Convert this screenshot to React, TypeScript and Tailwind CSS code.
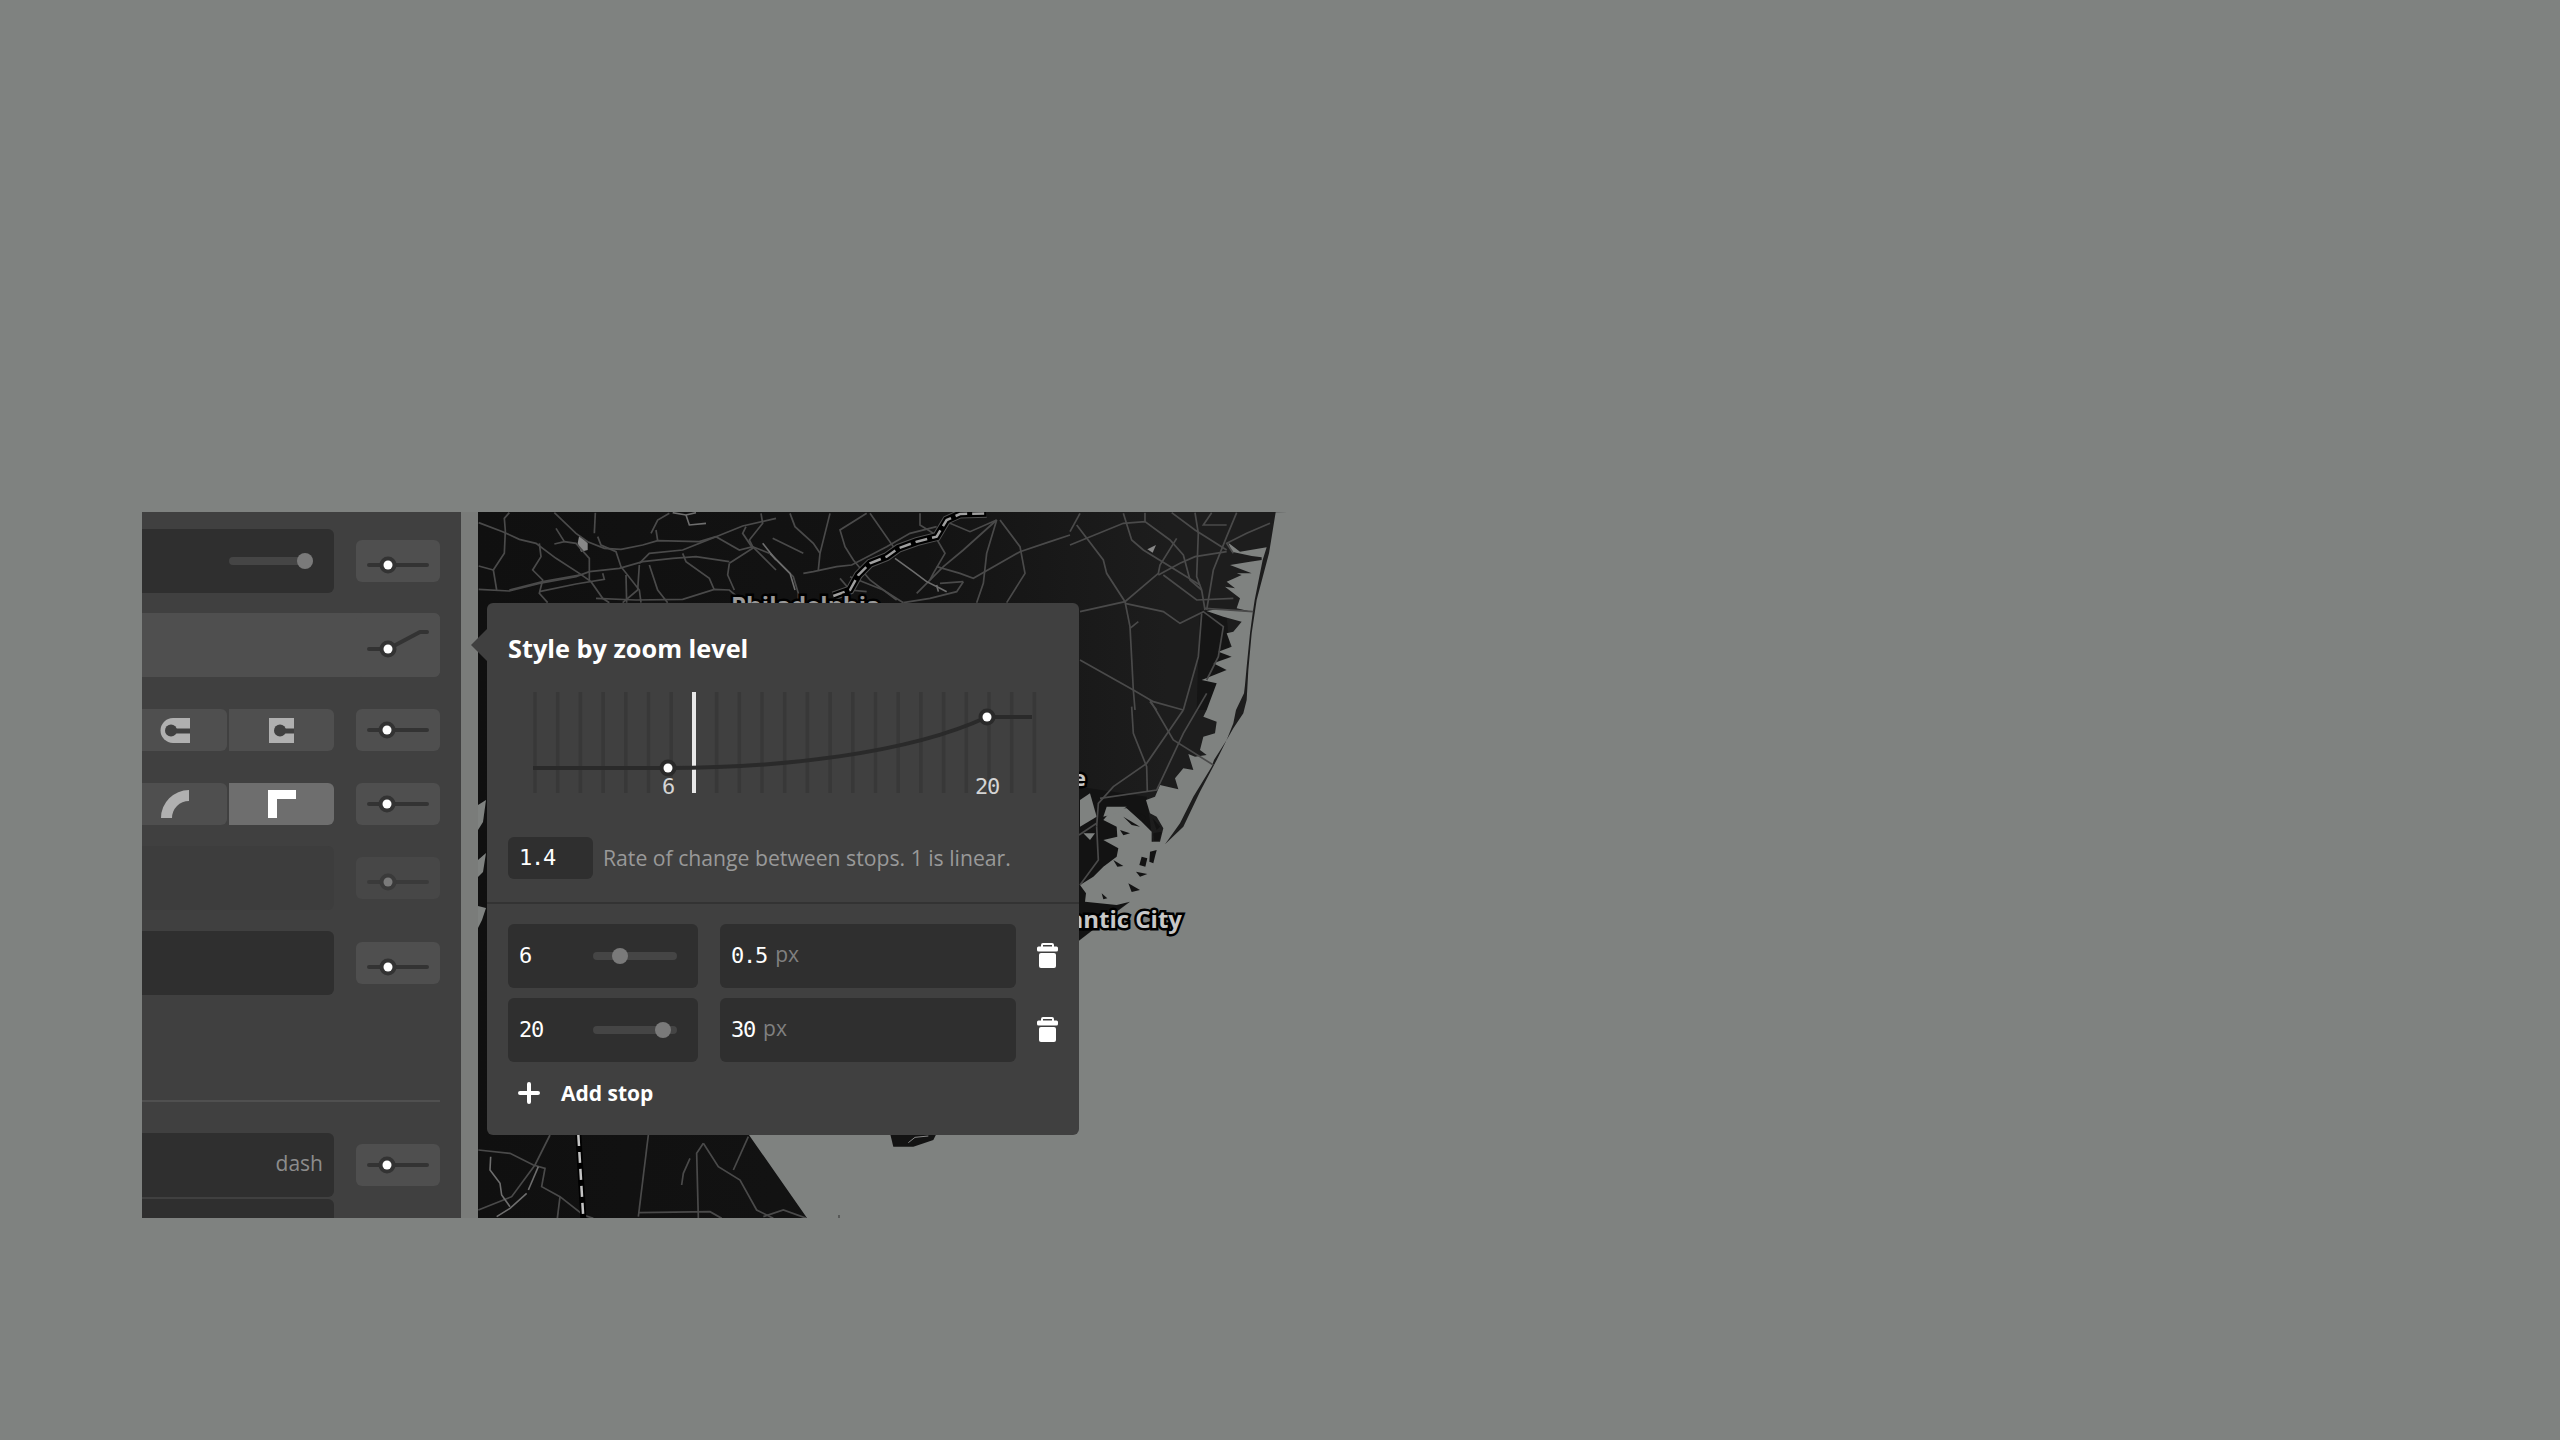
import type { ReactNode } from "react";

type P = [number, number];

// the map was traced from crops at 3x, so coordinates stay in crop space and get converted here
const z = (ox: number, oy: number, list: P[]) => list.map(([x, y]) => `${ox + x / 3},${oy + y / 3}`).join(" ");

const sea = [
  "1290,512",
  z(1070, 510, [[617, 7], [597, 130]]),
  z(1060, 600, [[590, 0], [575, 100], [565, 210], [560, 300], [550, 340], [520, 385], [500, 420], [470, 480], [420, 575], [370, 680], [315, 733], [360, 670], [400, 590], [455, 500], [462, 480], [500, 420], [520, 370], [528, 330], [552, 280], [555, 255], [560, 200], [570, 100], [578, 40], [584, 0]]),
  z(1070, 510, [[566, 210], [578, 150], [590, 112], [510, 125], [475, 98], [485, 125], [545, 138], [575, 142], [575, 150], [540, 155], [480, 165], [545, 190], [500, 190], [515, 195], [470, 215], [495, 235], [465, 230], [510, 265], [500, 295], [545, 305], [440, 298], [410, 303], [460, 320], [515, 335], [490, 365], [470, 370], [485, 410], [445, 425], [485, 440], [430, 460], [470, 480], [395, 510], [440, 520], [410, 600]]),
  z(1060, 600, [[430, 350], [470, 365], [465, 400], [430, 410], [420, 450], [440, 465], [405, 470], [385, 462], [400, 510], [370, 505], [345, 535], [355, 568], [300, 555], [285, 590], [258, 600], [270, 640], [290, 650], [310, 685], [300, 725], [275, 725], [275, 695], [245, 665], [200, 625], [160, 625], [130, 660], [170, 680], [172, 710], [130, 720], [175, 745], [170, 770], [130, 800], [100, 830], [60, 855], [78, 880], [75, 905], [170, 915], [210, 905], [150, 950], [57, 1022]]),
  "1050,960 749,1135 807,1218 1290,1218",
].join(" ");

const inlets: P[][] = [
  [[60, 600], [90, 580], [110, 650], [60, 680]],
  [[140, 620], [200, 620], [170, 640], [130, 650]],
  [[70, 700], [105, 700], [90, 720]],
];

const marsh: P[][] = [
  [[190, 650], [240, 680], [215, 675]],
  [[245, 770], [262, 775], [256, 800], [238, 795]],
  [[270, 755], [290, 750], [280, 790], [268, 785]],
  [[228, 815], [262, 822], [240, 830]],
  [[160, 780], [190, 798], [172, 800]],
  [[205, 850], [240, 870], [215, 876]],
  [[125, 880], [142, 895], [130, 898]],
  [[278, 655], [300, 680], [290, 690]],
  [[280, 700], [305, 695], [298, 722], [282, 722]],
  [[240, 640], [258, 650], [250, 668]],
  [[180, 690], [210, 700], [190, 706]],
];

const roadsTopLeft: P[][] = [
  [[8, 38], [80, 65], [130, 88], [180, 100], [240, 145], [310, 190], [345, 215], [380, 265], [400, 278]],
  [[100, 8], [85, 25], [88, 62], [85, 130], [52, 180], [62, 240]],
  [[8, 168], [52, 180]],
  [[235, 8], [300, 70], [335, 95], [385, 115], [435, 118], [500, 105], [545, 92], [670, 95], [720, 80], [800, 48], [900, 25]],
  [[358, 8], [355, 70]],
  [[8, 238], [100, 243], [190, 220], [300, 200], [340, 185], [430, 175], [500, 155], [590, 145], [660, 140], [760, 155]],
  [[100, 240], [200, 215], [310, 195]],
  [[190, 100], [195, 140], [170, 180], [200, 210], [190, 250], [215, 278]],
  [[190, 245], [300, 222], [385, 208], [380, 190]],
  [[365, 80], [375, 105], [420, 125], [435, 170], [490, 240], [495, 278]],
  [[450, 195], [452, 278]],
  [[490, 165], [485, 240], [440, 278]],
  [[520, 165], [545, 240], [575, 278]],
  [[360, 265], [480, 270], [620, 268], [715, 238], [760, 240], [790, 265]],
  [[620, 130], [630, 155], [700, 205], [715, 240]],
  [[490, 160], [520, 130], [620, 120], [720, 80], [790, 120], [830, 110], [900, 180]],
  [[760, 160], [755, 195], [775, 240]],
  [[760, 160], [830, 115], [800, 70], [810, 50]],
  [[525, 70], [545, 30], [580, 10]],
  [[545, 92], [540, 60]],
  [[855, 10], [860, 40], [820, 90], [830, 110], [880, 130]],
  [[240, 55], [265, 95], [235, 102]],
  [[265, 95], [300, 100], [340, 145], [340, 210]],
];

const roadsTopMid: P[][] = [
  [[0, 130], [70, 200], [85, 250], [85, 278]],
  [[60, 10], [75, 50], [130, 100], [150, 130], [145, 180]],
  [[8, 85], [100, 130]],
  [[100, 190], [130, 185], [200, 170], [245, 165], [350, 110], [420, 70], [500, 50]],
  [[180, 10], [165, 70], [150, 130]],
  [[290, 10], [210, 60], [225, 110], [250, 150], [300, 210], [380, 270]],
  [[300, 10], [370, 110], [390, 120]],
  [[450, 10], [450, 45], [490, 70], [525, 130], [490, 190], [480, 210]],
  [[680, 30], [650, 130], [640, 220], [620, 278]],
  [[690, 30], [750, 110], [765, 190], [710, 278]],
  [[900, 75], [840, 95], [750, 125], [610, 205], [570, 190], [500, 170]],
  [[580, 215], [560, 245], [480, 265], [400, 278]],
  [[510, 220], [580, 215]],
  [[680, 30], [600, 65], [540, 40]],
  [[680, 30], [580, 120], [520, 170], [440, 250]],
  [[240, 200], [340, 240], [400, 278]],
  [[210, 205], [240, 240], [290, 245]],
];

const roadsTopRight: P[][] = [
  [[30, 10], [0, 65]],
  [[20, 45], [100, 150], [110, 190], [165, 275], [180, 350], [190, 540], [195, 600]],
  [[0, 105], [160, 40], [225, 35], [300, 90], [340, 135], [360, 210], [395, 240]],
  [[160, 10], [185, 90], [220, 120], [390, 225]],
  [[225, 8], [225, 35]],
  [[305, 8], [375, 60], [470, 120]],
  [[375, 8], [385, 70], [380, 200], [395, 240], [405, 300]],
  [[425, 8], [400, 45], [470, 45]],
  [[500, 8], [470, 80], [430, 180], [410, 300]],
  [[320, 85], [270, 165], [265, 190], [165, 275], [30, 305]],
  [[265, 195], [330, 160], [375, 140], [470, 125]],
  [[280, 195], [380, 270], [490, 265]],
  [[165, 280], [280, 305], [330, 340], [400, 305], [460, 350], [445, 440], [410, 510]],
  [[395, 310], [385, 440], [340, 600]],
  [[30, 450], [190, 540], [250, 575], [340, 600]],
  [[205, 335], [180, 355]],
  [[600, 40], [530, 70], [470, 100], [490, 130]],
  [[405, 295], [550, 305]],
  [[240, 575], [260, 600]],
];

const roadsCoast: P[][] = [
  [[215, 320], [220, 400], [260, 500], [262, 575]],
  [[370, 330], [260, 490], [160, 560], [115, 610], [110, 680]],
  [[440, 280], [370, 400], [290, 570], [120, 595]],
  [[270, 300], [340, 420], [460, 495]],
  [[57, 705], [110, 670]],
  [[110, 680], [115, 780], [60, 855]],
];

const roadsBottom: P[][] = [
  [[25, 150], [120, 160], [190, 195], [225, 205], [215, 260], [270, 290], [340, 345], [370, 355]],
  [[240, 105], [195, 195], [125, 290], [25, 330]],
  [[535, 105], [505, 350]],
  [[505, 338], [720, 335], [755, 355]],
  [[700, 130], [680, 160], [685, 355]],
  [[700, 130], [745, 200], [810, 240], [860, 330], [910, 355]],
  [[835, 110], [790, 210]],
  [[270, 290], [262, 355]],
  [[880, 350], [940, 330], [1010, 355]],
  [[660, 175], [640, 220], [635, 255]],
];

const streams: [number, number, P[]][] = [
  [470, 1100, [[62, 170], [60, 210], [90, 250], [95, 285], [120, 320]]],
  [470, 1100, [[170, 280], [120, 325], [80, 350]]],
  [470, 1100, [[205, 200], [175, 270]]],
  [770, 510, [[375, 145], [430, 185], [470, 215], [510, 235], [530, 245]]],
  [770, 510, [[500, 225], [505, 245]]],
  [476, 510, [[590, 8], [630, 15], [660, 8]]],
  [476, 510, [[630, 15], [640, 45], [690, 40]]],
  [476, 510, [[860, 100], [900, 150]]],
  [770, 510, [[0, 130], [60, 190], [75, 240]]],
];

function Roads({ ox, oy, lines }: { ox: number; oy: number; lines: P[][] }) {
  return <>{lines.map((l, i) => <polyline key={i} points={z(ox, oy, l)} fill="none" stroke="#4a4a4a" strokeWidth="1.7" />)}</>;
}

function MapArt() {
  const highway = z(770, 510, [[190, 258], [240, 240], [265, 195], [300, 160], [350, 140], [385, 115], [440, 95], [500, 80], [530, 30], [570, 12], [650, 10]]);
  const turnpike = z(470, 1100, [[325, 105], [340, 355]]);
  const labelFont = { fontFamily: "'Open Sans', sans-serif", fontWeight: 700, paintOrder: "stroke" as const };
  return (
    <svg viewBox="478 512 810 706" width="810" height="706" className="block">
      <defs>
        <linearGradient id="land" x1="0" x2="1" y1="0" y2="0">
          <stop offset="0" stopColor="#101010" />
          <stop offset="0.55" stopColor="#131313" />
          <stop offset="0.85" stopColor="#1d1d1d" />
        </linearGradient>
      </defs>
      <rect x="478" y="512" width="810" height="706" fill="url(#land)" />
      <polygon points={z(1070, 510, [[390, 300], [470, 320], [480, 430], [420, 600], [380, 600], [385, 440]])} fill="#151515" />
      <polygon points={z(1060, 600, [[57, 560], [260, 590], [280, 740], [200, 910], [57, 1020]])} fill="#131313" />
      <polygon points={sea} fill="#7f8280" />
      {inlets.map((p, i) => <polygon key={i} points={z(1060, 600, p)} fill="#7f8280" />)}
      {marsh.map((p, i) => <polygon key={i} points={z(1060, 600, p)} fill="#131313" />)}
      <polygon points="478,805 486,800 483,822 478,830" fill="#7f8280" />
      <polygon points="478,860 486,853 483,872 478,877" fill="#7f8280" />
      <polygon points="478,906 486,908 482,920 478,928" fill="#7f8280" />
      <polygon points={z(470, 1100, [[1260, 100], [1400, 100], [1390, 120], [1330, 140], [1270, 140]])} fill="#131313" />
      <polyline points={z(470, 1100, [[1315, 128], [1335, 112], [1375, 108]])} fill="none" stroke="#888" strokeWidth="1" />
      <line x1="839" y1="1215" x2="839" y2="1218" stroke="#333" strokeWidth="1" />
      <polygon points={z(476, 510, [[310, 75], [335, 100], [335, 120], [315, 125], [305, 100]])} fill="#888" />
      <polygon points={z(1070, 510, [[232, 118], [258, 105], [248, 128]])} fill="#888" />
      <Roads ox={476} oy={510} lines={roadsTopLeft} />
      <Roads ox={770} oy={510} lines={roadsTopMid} />
      <Roads ox={1070} oy={510} lines={roadsTopRight} />
      <Roads ox={1060} oy={600} lines={roadsCoast} />
      <Roads ox={470} oy={1100} lines={roadsBottom} />
      {streams.map(([ox, oy, l], i) => <polyline key={i} points={z(ox, oy, l)} fill="none" stroke="#6e6e6e" strokeWidth="1.6" />)}
      <polyline points={highway} fill="none" stroke="#505050" strokeWidth="9" />
      <polyline points={highway} fill="none" stroke="#000" strokeWidth="7" />
      <polyline points={highway} fill="none" stroke="#a0a0a0" strokeWidth="2.5" strokeDasharray="12 5" />
      <polyline points={turnpike} fill="none" stroke="#000" strokeWidth="6" />
      <polyline points={turnpike} fill="none" stroke="#c4c4c4" strokeWidth="2.5" strokeDasharray="11 6" />
      <text x="731" y="614" fontSize="24" fill="#9a9a9a" stroke="#000" strokeWidth="5" style={labelFont}>Philadelphia</text>
      <text x="1086" y="786" fontSize="22" textAnchor="end" fill="#c8c8c8" stroke="#000" strokeWidth="5" style={labelFont}>Millville</text>
      <text x="1182" y="928" fontSize="24" textAnchor="end" fill="#c8c8c8" stroke="#000" strokeWidth="5" style={labelFont}>Atlantic City</text>
    </svg>
  );
}

function ToggleBtn({ y = 21, knob = 31, dim = false, curve = false, tall = false }: { y?: number; knob?: number; dim?: boolean; curve?: boolean; tall?: boolean }) {
  const line = dim ? "#3a3a3a" : "#333333";
  return (
    <div className={`w-[84px] shrink-0 rounded-md ${tall ? "h-16" : "h-[42px]"} ${dim ? "bg-[#474747]" : "bg-[#4f4f4f]"}`}>
      <svg width="84" height={tall ? 64 : 42} className="block">
        {curve
          ? <polyline points={`13,${y} ${knob},${y} 64,19 71,19`} fill="none" stroke={line} strokeWidth="4" strokeLinecap="round" strokeLinejoin="round" />
          : <line x1="13" x2="71" y1={y} y2={y} stroke={line} strokeWidth="4" strokeLinecap="round" />}
        <circle cx={knob} cy={y} r="8.5" fill={line} />
        <circle cx={knob} cy={y} r="4.5" fill={dim ? "#7a7a7a" : "#ffffff"} />
      </svg>
    </div>
  );
}

function Track({ at, className = "" }: { at: number; className?: string }) {
  return (
    <div className={`relative h-2 w-[84px] rounded-full bg-[#454545] ${className}`}>
      <div className="absolute top-[-4px] h-4 w-4 -translate-x-1/2 rounded-full bg-[#7a7a7a]" style={{ left: at }} />
    </div>
  );
}

function Seg({ children, active = false }: { children: ReactNode; active?: boolean }) {
  return (
    <div className={`flex h-full w-[105px] shrink-0 items-center justify-center rounded-r-md ${active ? "bg-[#6e6e6e]" : "bg-[#4f4f4f]"}`}>
      {children}
    </div>
  );
}

function Panel() {
  return (
    <div className="flex h-[706px] w-[319px] shrink-0 flex-col overflow-hidden bg-[#404040] pr-[21px] pt-[17px] font-['Open_Sans',sans-serif]">
      <div className="flex items-center justify-between">
        <div className="flex h-16 w-[192px] items-center justify-end rounded-r-md bg-[#2f2f2f] pr-[21px]">
          <Track at={76} />
        </div>
        <ToggleBtn y={25} knob={32} />
      </div>
      <div className="mt-5 flex h-16 justify-end rounded-r-md bg-[#4f4f4f]">
        <ToggleBtn y={36} knob={32} curve tall />
      </div>
      <div className="mt-8 flex h-[42px] items-center justify-between">
        <div className="flex h-full w-[192px] justify-end gap-[2px]">
          <Seg>
            <svg width="30" height="25" viewBox="0 0 30 25">
              <path d="M13 0H30V25H13A12.5 12.5 0 0 1 13 0Z" fill="#b0b0b0" />
              <circle cx="11" cy="12.5" r="6" fill="#404040" />
              <rect x="11" y="10.5" width="19" height="5" fill="#404040" />
            </svg>
          </Seg>
          <Seg>
            <svg width="25" height="25" viewBox="0 0 25 25">
              <rect width="25" height="25" fill="#b0b0b0" />
              <circle cx="11" cy="12.5" r="6" fill="#404040" />
              <rect x="11" y="10.5" width="14" height="5" fill="#404040" />
            </svg>
          </Seg>
        </div>
        <ToggleBtn knob={31} />
      </div>
      <div className="mt-8 flex h-[42px] items-center justify-between">
        <div className="flex h-full w-[192px] justify-end gap-[2px]">
          <Seg>
            <svg width="28" height="28" viewBox="0 0 28 28">
              <path d="M28 0V11A17 17 0 0 0 11 28H0A28 28 0 0 1 28 0Z" fill="#b0b0b0" />
            </svg>
          </Seg>
          <Seg active>
            <svg width="28" height="28" viewBox="0 0 28 28">
              <path d="M0 0H28V9H9V28H0Z" fill="#ffffff" />
            </svg>
          </Seg>
        </div>
        <ToggleBtn knob={31} />
      </div>
      <div className="mt-[21px] flex items-center justify-between">
        <div className="h-16 w-[192px] rounded-r-md bg-[#3d3d3d]" />
        <ToggleBtn y={25} knob={32} dim />
      </div>
      <div className="mt-[21px] flex items-center justify-between">
        <div className="h-16 w-[192px] rounded-r-md bg-[#2f2f2f]" />
        <ToggleBtn y={25} knob={32} />
      </div>
      <div className="mt-[105px] h-[2px] shrink-0 bg-[#505050]" />
      <div className="mt-[31px] flex items-center justify-between">
        <div className="flex h-16 w-[192px] items-center justify-end rounded-r-md bg-[#2f2f2f] pb-[2px] pr-[11px] text-[21px] text-[#8c8c8c]">dash</div>
        <ToggleBtn knob={31} />
      </div>
      <div className="mt-[2px] h-16 w-[192px] shrink-0 rounded-r-md bg-[#2f2f2f]" />
    </div>
  );
}

function Chart() {
  const ticks = Array.from({ length: 23 }, (_, i) => 27 + i * 22.7);
  return (
    <svg width="550" height="112" className="mb-[-7px] mt-[26px] block">
      {ticks.map((x) => <rect key={x} x={x - 1.75} y="0" width="3.5" height="101" fill="#383838" />)}
      <rect x="184" y="0" width="4" height="101" fill="#e8e8e8" />
      <path d="M25 76H160C270 76 400 62 479 25H524" fill="none" stroke="#2a2a2a" strokeWidth="4" />
      <circle cx="160" cy="76" r="8.5" fill="#2a2a2a" />
      <circle cx="160" cy="76" r="4.5" fill="#ffffff" />
      <circle cx="479" cy="25" r="8.5" fill="#2a2a2a" />
      <circle cx="479" cy="25" r="4.5" fill="#ffffff" />
      <text x="160" y="102" textAnchor="middle" fontSize="22" letterSpacing="-1.2" fill="#d4d4d4" fontFamily="'DejaVu Sans Mono', monospace">6</text>
      <text x="479" y="102" textAnchor="middle" fontSize="22" letterSpacing="-1.2" fill="#d4d4d4" fontFamily="'DejaVu Sans Mono', monospace">20</text>
    </svg>
  );
}

function Trash() {
  return (
    <svg width="21" height="25" viewBox="0 0 21 25" fill="#ffffff" className="shrink-0">
      <path d="M6 0H15A2 2 0 0 1 17 2V4H15V2H6V4H4V2A2 2 0 0 1 6 0Z" />
      <rect x="0" y="3.5" width="21" height="5" rx="1.5" />
      <rect x="2" y="10" width="17" height="15" rx="2" />
    </svg>
  );
}

function StopRow({ zoom, at, value }: { zoom: string; at: number; value: string }) {
  const mono = "font-['DejaVu_Sans_Mono',monospace] text-[22px] tracking-[-1.2px] text-white";
  return (
    <div className="flex h-16 items-center">
      <div className="flex h-full w-[190px] items-center justify-between rounded-md bg-[#2f2f2f] pb-[2px] pl-[11px] pr-[21px]">
        <span className={mono}>{zoom}</span>
        <Track at={at} className="mt-[2px]" />
      </div>
      <div className="ml-[22px] flex h-full w-[296px] items-center rounded-md bg-[#2f2f2f] pb-[2px] pl-[11px]">
        <span className={mono}>{value}</span>
        <span className="ml-2 text-[21px] text-[#808080]">px</span>
      </div>
      <div className="ml-[21px] mb-[2px]"><Trash /></div>
    </div>
  );
}

function Popup() {
  return (
    <div className="absolute left-[9px] top-[91px] h-[532px] w-[592px] rounded-md bg-[#404040] pt-[27px] font-['Open_Sans',sans-serif]">
      <div className="absolute left-[-11px] top-[30px] h-6 w-6 rotate-45 bg-[#404040]" />
      <div className="relative px-[21px]">
        <h2 className="h-9 text-[25.3px] font-bold leading-9 text-white">Style by zoom level</h2>
        <Chart />
        <div className="mt-10 flex h-[42px] items-center">
          <div className="flex h-full w-[85px] items-center rounded-md bg-[#2f2f2f] pb-[2px] pl-[11px] font-['DejaVu_Sans_Mono',monospace] text-[22px] tracking-[-1.2px] text-white">1.4</div>
          <p className="ml-[10px] text-[21.2px] text-[#999999]">Rate of change between stops. 1 is linear.</p>
        </div>
      </div>
      <div className="mt-[23px] h-[2px] bg-[#333333]" />
      <div className="px-[21px] pt-5">
        <div className="flex flex-col gap-[10px]">
          <StopRow zoom="6" at={27} value="0.5" />
          <StopRow zoom="20" at={70} value="30" />
        </div>
        <div className="mt-4 flex h-[30px] items-center pl-[10px]">
          <svg width="22" height="22" viewBox="0 0 22 22" className="shrink-0">
            <path d="M11 2V20M2 11H20" stroke="#ffffff" strokeWidth="4" strokeLinecap="round" />
          </svg>
          <span className="ml-[21px] pt-[2px] text-[21px] font-bold text-white">Add stop</span>
        </div>
      </div>
    </div>
  );
}

export default function App() {
  return (
    <div className="flex min-h-[1440px] items-start bg-[#7f8280] pl-[142px] pt-[512px]">
      <Panel />
      <div className="h-[706px] w-[17px] shrink-0 bg-[#7a7c7a]" />
      <div className="relative h-[706px] w-[810px] shrink-0">
        <MapArt />
        <Popup />
      </div>
    </div>
  );
}
